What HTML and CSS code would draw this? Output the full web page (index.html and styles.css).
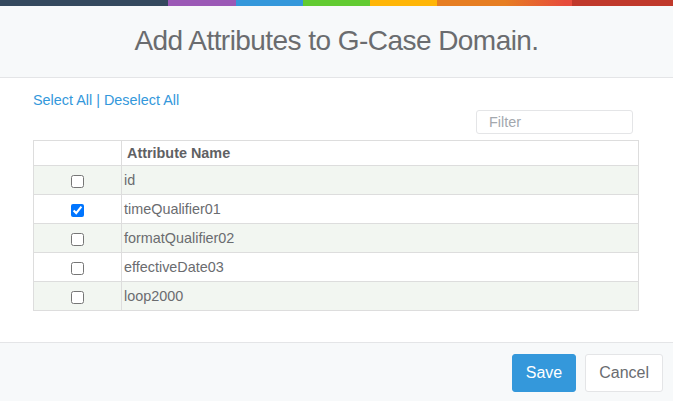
FILE: index.html
```html
<!DOCTYPE html>
<html>
<head>
<meta charset="utf-8">
<link rel="stylesheet" href="styles.css">
</head>
<body>
<div class="modal">
  <div class="color-line"></div>
  <div class="modal-header">
    <h4 class="modal-title">Add Attributes to G-Case Domain.</h4>
  </div>
  <div class="modal-body">
    <div class="select-links">
      <a href="#" class="link">Select All</a> <span class="sep">|</span> <a href="#" class="link">Deselect All</a>
    </div>
    <div class="filter-row">
      <input type="text" class="filter" placeholder="Filter">
    </div>
    <table class="attr-table">
      <thead>
        <tr><th class="col-check"></th><th class="col-name">Attribute Name</th></tr>
      </thead>
      <tbody>
        <tr class="odd"><td class="col-check"><input type="checkbox"></td><td class="col-name">id</td></tr>
        <tr><td class="col-check"><input type="checkbox" checked></td><td class="col-name">timeQualifier01</td></tr>
        <tr class="odd"><td class="col-check"><input type="checkbox"></td><td class="col-name">formatQualifier02</td></tr>
        <tr><td class="col-check"><input type="checkbox"></td><td class="col-name">effectiveDate03</td></tr>
        <tr class="odd"><td class="col-check"><input type="checkbox"></td><td class="col-name">loop2000</td></tr>
      </tbody>
    </table>
  </div>
  <div class="modal-footer">
    <button class="btn btn-primary">Save</button>
    <button class="btn btn-default">Cancel</button>
  </div>
</div>
</body>
</html>
```
FILE: styles.css
```css
html, body {
  margin: 0;
  padding: 0;
  background: #ffffff;
}
body {
  font-family: "Liberation Sans", Arial, sans-serif;
  font-size: 14.4px;
  color: #6a6c6f;
}
.modal {
  display: flex;
  flex-direction: column;
  min-height: 401px;
}
.color-line {
  height: 6px;
  background-image: linear-gradient(to right,
    #34495e 0%, #34495e 25%,
    #9b59b6 25%, #9b59b6 35%,
    #3498db 35%, #3498db 45%,
    #62cb31 45%, #62cb31 55%,
    #ffb606 55%, #ffb606 65%,
    #e67e22 65%, #e67e22 75%,
    #e74c3c 84%, #e74c3c 85%,
    #c0392b 85%, #c0392b 100%);
}
.modal-header {
  background: #f7f9fa;
  border-bottom: 1px solid #e4e5e7;
  padding: 19px 20px 21px;
  text-align: center;
}
.modal-title {
  margin: 0;
  font-weight: normal;
  font-size: 28px;
  letter-spacing: -0.55px;
  line-height: 31px;
  color: #6a6c6f;
  white-space: nowrap;
}
.modal-body {
  padding: 12px 34px 31px 33px;
}
.select-links {
  line-height: 20px;
}
.link {
  color: #3498db;
  text-decoration: none;
}
.sep {
  color: #3498db;
}
.filter-row {
  display: flex;
  justify-content: flex-end;
  padding-right: 6px;
}
.filter {
  box-sizing: border-box;
  width: 157px;
  height: 24px;
  border: 1px solid #e4e5e7;
  border-radius: 3px;
  padding: 0 12px;
  font-family: "Liberation Sans", Arial, sans-serif;
  font-size: 14.4px;
  color: #6a6c6f;
  outline: none;
}
.filter::placeholder {
  color: #a3a8ae;
}
.attr-table {
  margin-top: 6px;
  width: 100%;
  border-collapse: collapse;
  border: 1px solid #dddddd;
}
.attr-table th, .attr-table td {
  border: 1px solid #dddddd;
  font-size: 14.4px;
  line-height: 20px;
  text-align: left;
  vertical-align: middle;
}
.attr-table th {
  height: 24px;
  padding: 0 5px;
  font-weight: bold;
  color: #5f6164;
}
.attr-table td {
  height: 28px;
  padding: 0 2px;
}
.attr-table .col-check {
  width: 87px;
  text-align: center;
  padding: 0;
}
.attr-table td.col-check input {
  margin: 1px 0 0 0;
  vertical-align: middle;
  width: 13px;
  height: 13px;
}
.attr-table tr.odd td {
  background: #f2f6f1;
}
.modal-footer {
  flex: 1;
  background: #f7f9fa;
  border-top: 1px solid #e4e5e7;
  padding: 11px 10px;
  display: flex;
  justify-content: flex-end;
  align-items: flex-start;
  gap: 9px;
}
.btn {
  font-family: "Liberation Sans", Arial, sans-serif;
  font-size: 16px;
  height: 38px;
  padding: 0 13px;
  border-radius: 3px;
  cursor: pointer;
}
.btn-primary {
  background: #3498db;
  border: 1px solid #3498db;
  color: #ffffff;
}
.btn-default {
  background: #ffffff;
  border: 1px solid #e4e5e7;
  color: #6a6c6f;
}
```
